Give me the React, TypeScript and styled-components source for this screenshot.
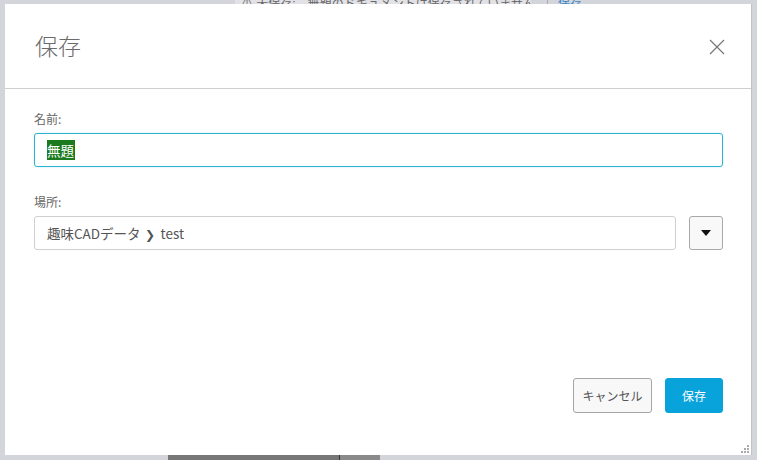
import styled, { createGlobalStyle } from "styled-components";

const GlobalStyle = createGlobalStyle`
    html, body {
        margin: 0;
        padding: 0;
        background: #d4d5da;
        font-family: "Liberation Sans", "Noto Sans CJK JP", sans-serif;
    }
`

const Screen = styled.div`
    width: 757px;
    height: 460px;
    display: flex;
    flex-direction: column;
    overflow: hidden;
    background: #d4d5da;
`

// strip of the page behind the dialog, mostly hidden
const TopStrip = styled.div`
    height: 4px;
    display: flex;
    padding-left: 235px;
    overflow: hidden;
`

const Notice = styled.div`
    display: flex;
    align-items: flex-end;
    gap: 12px;
    height: 4px;
    width: 284px;
    padding: 0 6px;
    background: #e2e2e6;
    font-size: 12px;
    line-height: 12px;
    color: #666;
    white-space: nowrap;

    span {
        margin-bottom: -6px;
    }
`

const NoticeLink = styled.span`
    color: #3a86c8;
    border-left: 1px solid #aaa;
    padding-left: 10px;
`

const Dialog = styled.div`
    margin-left: 5px;
    width: 746px;
    height: 451px;
    background: #fff;
    border-right: 1px solid #c2c3c8;
    display: flex;
    flex-direction: column;
    position: relative;
    font-family: "Noto Sans CJK JP", "Liberation Sans", sans-serif;
`

const Header = styled.div`
    height: 84px;
    border-bottom: 1px solid #cfcfcf;
    display: flex;
    align-items: center;
    justify-content: space-between;
    padding: 0 26px 0 30px;
`

const Title = styled.h1`
    margin: 0 0 2px 0;
    font-size: 23px;
    font-weight: 300;
    color: #6b6b6b;
`

const CloseButton = styled.button`
    border: none;
    background: none;
    padding: 0;
    margin-top: 2px;
    width: 16px;
    height: 16px;
    display: flex;
    cursor: pointer;
`

const Body = styled.div`
    flex: 1;
    padding: 23px 28px 0 29px;
    display: flex;
    flex-direction: column;
`

const Label = styled.label`
    font-size: 12px;
    color: #666;
    line-height: 14px;
    margin-bottom: 7px;
`

const Field = styled.div<{$focused?: boolean}>`
    flex: 1;
    height: 32px;
    border: 1px solid ${p => p.$focused ? "#2eb2d3" : "#cfcfcf"};
    border-radius: 3px;
    display: flex;
    align-items: center;
    padding: 0 12px;
    font-size: 13.5px;
    color: #555;
    box-shadow: ${p => p.$focused ? "0 0 2px rgba(46,178,211,0.35)" : "none"};
`

const Selected = styled.span`
    background: #1b7a1e;
    color: #fff;
    padding: 1px 1px 1px 0;
    line-height: 18px;
`

const Row = styled.div<{$gap?: number}>`
    display: flex;
    gap: 13px;
    margin-bottom: ${p => p.$gap ?? 0}px;
`

const Crumb = styled.span`
    margin: 0 6px 0 4px;
    font-size: 12px;
    color: #555;
`

const DropButton = styled.button`
    width: 34px;
    height: 34px;
    border: 1px solid #a8a8a8;
    border-radius: 3px;
    background: #f8f8f8;
    display: flex;
    align-items: center;
    justify-content: center;
    padding: 0;
`

const Footer = styled.div`
    display: flex;
    justify-content: flex-end;
    gap: 13px;
    padding: 0 28px 42px 0;
`

const Button = styled.button<{$primary?: boolean}>`
    width: ${p => p.$primary ? 58 : 79}px;
    height: 35px;
    padding: 0;
    border-radius: 3px;
    font-family: "Noto Sans CJK JP", sans-serif;
    font-size: 12px;
    border: 1px solid ${p => p.$primary ? "#09a3dc" : "#a5a5a5"};
    background: ${p => p.$primary ? "#09a3dc" : "#f8f8f8"};
    color: ${p => p.$primary ? "#fff" : "#555"};
`

const Grip = styled.svg`
    position: absolute;
    right: 1px;
    bottom: 1px;
`

const BottomStrip = styled.div`
    height: 5px;
    display: flex;
    padding-left: 168px;
`

const Taskbar = styled.div`
    width: 171px;
    height: 5px;
    background: #777;
    border-right: 1px solid #333;
`

const TaskbarTail = styled.div`
    width: 40px;
    height: 5px;
    background: #8a8a8a;
`

export default function App() {
    return (
        <>
            <GlobalStyle />
            <Screen>
                <TopStrip>
                    <Notice>
                        <span>⚠ 未保存:</span>
                        <span>無題のドキュメントは保存されていません</span>
                        <NoticeLink>保存</NoticeLink>
                    </Notice>
                </TopStrip>

                <Dialog>
                    <Header>
                        <Title>保存</Title>
                        <CloseButton aria-label="close">
                            <svg width="16" height="16" viewBox="0 0 16 16">
                                <path d="M1 1 L15 15 M15 1 L1 15" stroke="#777" strokeWidth="1.2" />
                            </svg>
                        </CloseButton>
                    </Header>

                    <Body>
                        <Label>名前:</Label>
                        <Row $gap={28}>
                            <Field $focused><Selected>無題</Selected></Field>
                        </Row>

                        <Label>場所:</Label>
                        <Row>
                            <Field>
                                趣味CADデータ<Crumb>❯</Crumb>test
                            </Field>
                            <DropButton aria-label="open">
                                <svg width="10" height="6" viewBox="0 0 10 6">
                                    <path d="M0 0 L10 0 L5 6 Z" fill="#111" />
                                </svg>
                            </DropButton>
                        </Row>
                    </Body>

                    <Footer>
                        <Button>キャンセル</Button>
                        <Button $primary>保存</Button>
                    </Footer>

                    <Grip width="10" height="10" viewBox="0 0 10 10">
                        <rect x="7" y="1" width="2" height="2" fill="#aaa" />
                        <rect x="4" y="4" width="2" height="2" fill="#aaa" />
                        <rect x="7" y="4" width="2" height="2" fill="#aaa" />
                        <rect x="1" y="7" width="2" height="2" fill="#aaa" />
                        <rect x="4" y="7" width="2" height="2" fill="#aaa" />
                        <rect x="7" y="7" width="2" height="2" fill="#aaa" />
                    </Grip>
                </Dialog>

                <BottomStrip>
                    <Taskbar />
                    <TaskbarTail />
                </BottomStrip>
            </Screen>
        </>
    )
}
